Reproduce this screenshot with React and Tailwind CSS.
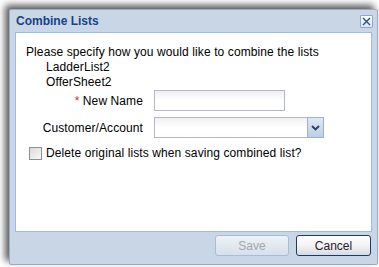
import React from 'react';

const font = { fontFamily: '"Liberation Sans", Arial, sans-serif' };

const App = () => {
  return (
    <div className="w-[379px] h-[267px] bg-white pl-[9px] pt-[9px] overflow-hidden" style={font}>
      <div className="w-[369px] h-[256px] flex flex-col border border-[#99aac4] bg-[#c9d6e6] rounded-[2px] shadow-[-4px_-4px_7px_rgba(0,0,0,0.65)]">
        {/* title bar */}
        <div className="h-[22px] flex items-center justify-between pl-[6px] pr-[4px]">
          <span className="text-[12px] font-bold text-[#15428b]">Combine Lists</span>
          <button className="w-[13px] h-[13px] flex items-center justify-center border border-[#8aa7cf] bg-gradient-to-b from-white to-[#dce6f3] rounded-[1px]">
            <svg width="9" height="9" viewBox="0 0 9 9">
              <path d="M1 1L8 8M8 1L1 8" stroke="#2b4f86" strokeWidth="1.4" />
            </svg>
          </button>
        </div>

        {/* body */}
        <div className="mx-[5px] h-[200px] border border-[#99bbe8] bg-white pl-[10px] pt-[12px] text-[12px] text-black tracking-[0.1px]">
          <div className="leading-[14px]">Please specify how you would like to combine the lists</div>
          <div className="pl-[20px] leading-[14px] mt-[1px]">LadderList2</div>
          <div className="pl-[20px] leading-[14px] mt-[1px]">OfferSheet2</div>

          <div className="flex items-center mt-[1px]">
            <label className="w-[128px] text-right pr-[11px] leading-[14px]">
              <span className="text-[#e0282e]">*</span> New Name
            </label>
            <div className="w-[131px] h-[21px] border border-[#b5b8c8] bg-gradient-to-b from-[#f0f0f0] via-white to-white" />
          </div>

          <div className="flex items-center mt-[6px]">
            <label className="w-[128px] text-right pr-[11px] leading-[14px]">Customer/Account</label>
            <div className="flex h-[21px]">
              <div className="w-[153px] h-[21px] border border-[#b5b8c8] border-r-0 bg-gradient-to-b from-[#f0f0f0] via-white to-white" />
              <div className="w-[17px] h-[21px] flex items-center justify-center border border-[#98b3d6] bg-gradient-to-b from-[#dfe8f4] to-[#bccee6]">
                <svg width="9" height="6" viewBox="0 0 9 6">
                  <path d="M1 1L4.5 4.5L8 1" stroke="#243f70" strokeWidth="1.8" fill="none" />
                </svg>
              </div>
            </div>
          </div>

          <div className="flex items-center mt-[8px] pl-[3px]">
            <div className="w-[13px] h-[13px] border border-[#8f8f8f] bg-gradient-to-br from-[#dcdcdc] to-[#f8f8f8] mr-[4px]" />
            <span className="leading-[14px]">Delete original lists when saving combined list?</span>
          </div>
        </div>

        {/* footer */}
        <div className="flex justify-end gap-[7px] pr-[6px] pt-[3px]">
          <button className="w-[74px] h-[21px] rounded-[3px] border border-[#a9bcd6] bg-gradient-to-b from-[#eef2f7] to-[#d7dfe9] text-[12px] text-[#a3a8b0]">
            Save
          </button>
          <button className="w-[75px] h-[21px] rounded-[3px] border border-[#1c3a66] bg-gradient-to-b from-white via-[#f3f3f3] to-[#d6dbe2] text-[12px] text-[#1d1d2d]">
            Cancel
          </button>
        </div>
      </div>
    </div>
  );
};

export default App;
